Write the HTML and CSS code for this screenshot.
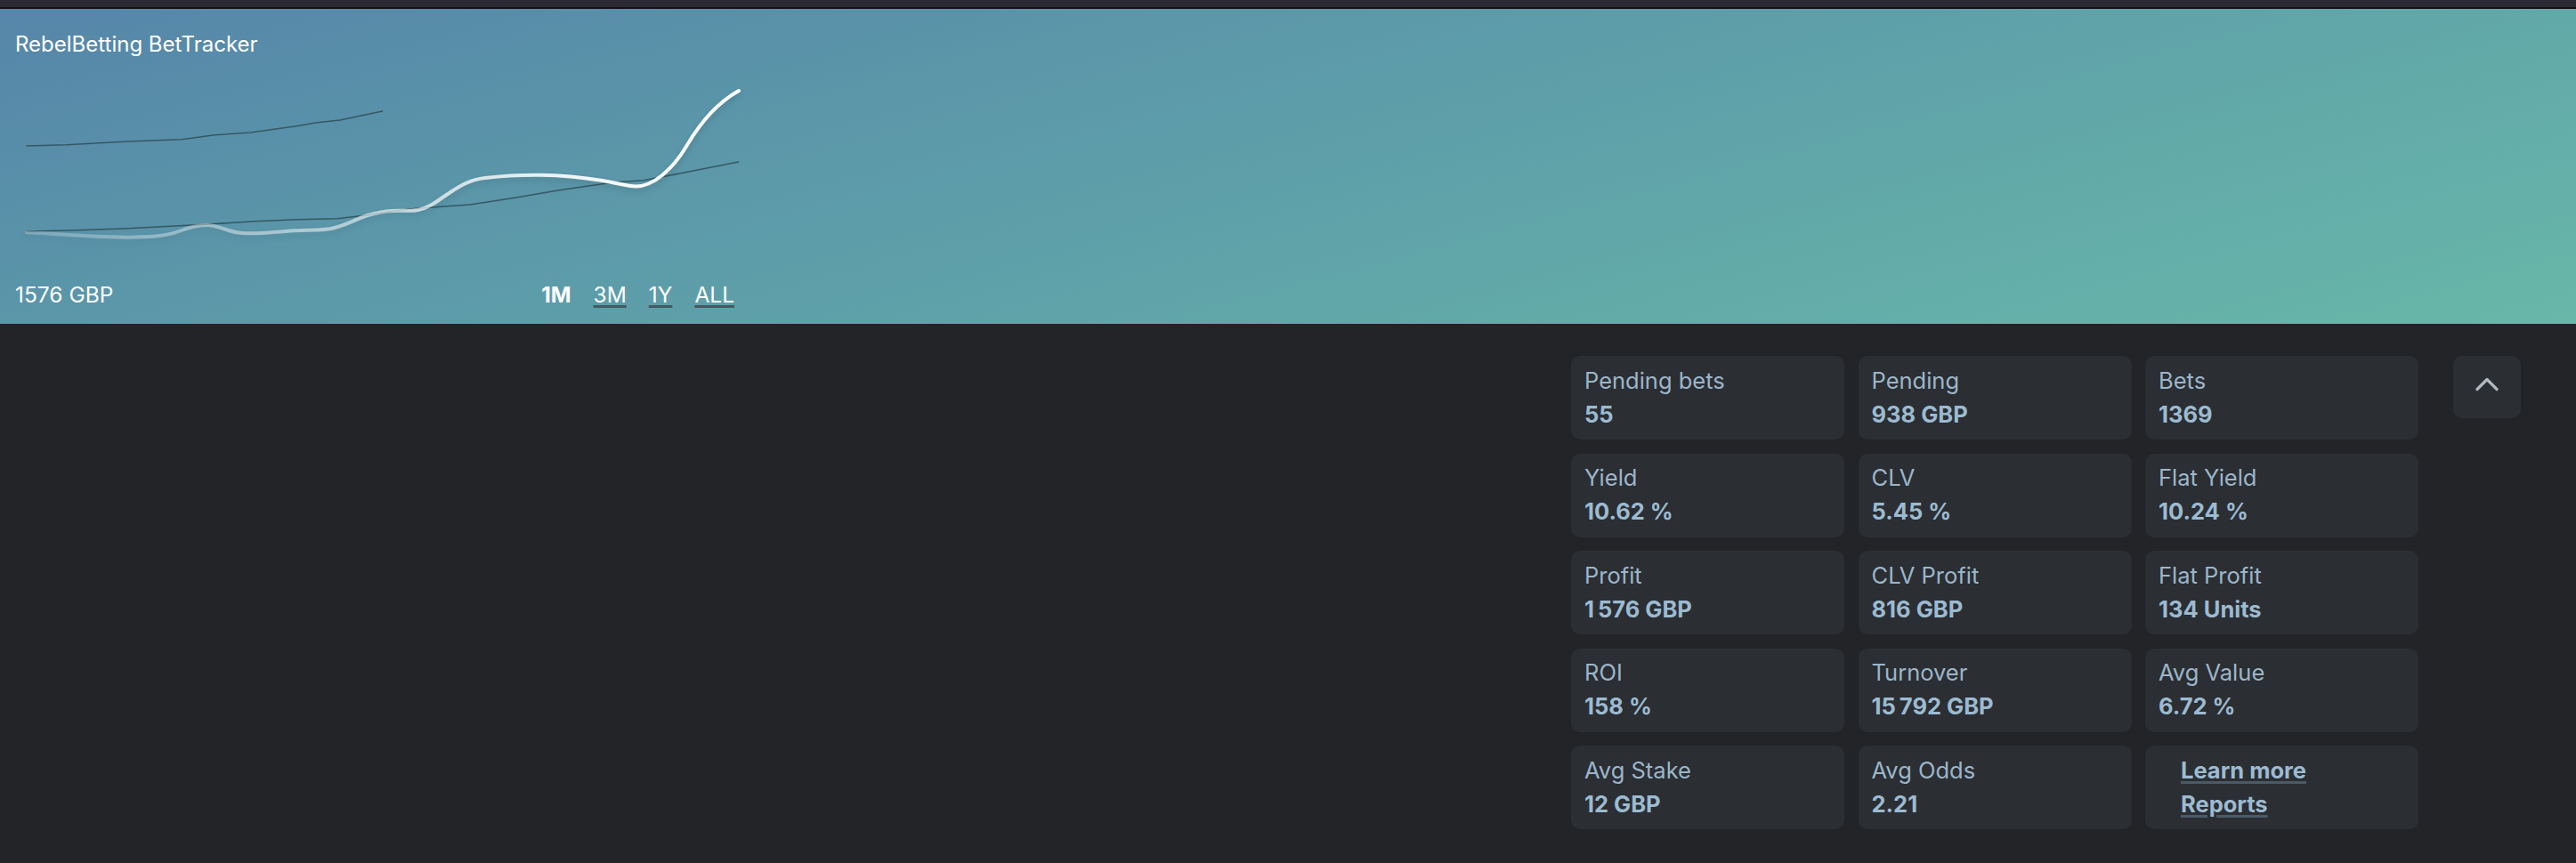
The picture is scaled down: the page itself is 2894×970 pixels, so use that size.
FILE: index.html
```html
<!DOCTYPE html>
<html lang="en">
<head>
<meta charset="utf-8">
<title>RebelBetting BetTracker</title>
<link rel="stylesheet" href="styles.css">
</head>
<body>
<div class="topbar"></div>
<header class="hero">
  <div class="hero-inner">
    <div class="hero-title">RebelBetting BetTracker</div>
    <svg class="chart" width="813" height="251" viewBox="17 65 813 251" xmlns="http://www.w3.org/2000/svg">
      <defs>
        <linearGradient id="mainGrad" gradientUnits="userSpaceOnUse" x1="30" y1="0" x2="830" y2="0">
          <stop offset="0" stop-color="#ffffff" stop-opacity="0.22"/>
          <stop offset="0.45" stop-color="#ffffff" stop-opacity="0.55"/>
          <stop offset="0.75" stop-color="#ffffff" stop-opacity="0.9"/>
          <stop offset="1" stop-color="#ffffff" stop-opacity="1"/>
        </linearGradient>
      </defs>
      <polyline class="line-thin" points="30,164 75,162.7 143.5,159 204,156.7 241,151.7 281,149 333,141.7 356,137.7 382,135 429.5,125"/>
      <polyline class="line-thin" points="30,260 86,258.7 143.5,256.7 229.6,252.3 287,248.7 333,246.7 379,245.7 413,241.7 459,235 528,230 574,223 631.5,213.3 689,205 723,202.7 775,192.7 829.5,182"/>
      <path class="line-main" d="M30,261 C60,263 110,267 143.5,266.7 C165,266.5 185,266 201,260 C214,255 222,253 232,253 C246,253 256,261 272,262 C288,263.5 305,261 327,259.5 C345,258.5 362,259 372,257 C390,253 400,246 413,242 C424,239 430,237.5 440,237 C452,236.5 460,237.5 470,236 C484,233 492,225 505,216.7 C518,208 528,202 545,200 C565,197.5 590,196.5 608,196.7 C628,197 655,199.5 677,203 C695,206 705,209.5 714.7,209.5 C724,209.5 734,205 744,197 C754,188 762,180 772,163 C785,141 805,116 830,102"/>
    </svg>
    <div class="hero-foot">
      <span class="balance">1576 GBP</span>
      <nav class="ranges">
        <a class="range range-active">1M</a>
        <a class="range">3M</a>
        <a class="range">1Y</a>
        <a class="range">ALL</a>
      </nav>
    </div>
  </div>
</header>
<main class="stats-area">
  <section class="stats-grid">
    <div class="stat"><div class="stat-label">Pending bets</div><div class="stat-value">55</div></div>
    <div class="stat"><div class="stat-label">Pending</div><div class="stat-value">938 GBP</div></div>
    <div class="stat"><div class="stat-label">Bets</div><div class="stat-value">1369</div></div>
    <div class="stat"><div class="stat-label">Yield</div><div class="stat-value">10.62 %</div></div>
    <div class="stat"><div class="stat-label">CLV</div><div class="stat-value">5.45 %</div></div>
    <div class="stat"><div class="stat-label">Flat Yield</div><div class="stat-value">10.24 %</div></div>
    <div class="stat"><div class="stat-label">Profit</div><div class="stat-value">1&#8239;576 GBP</div></div>
    <div class="stat"><div class="stat-label">CLV Profit</div><div class="stat-value">816 GBP</div></div>
    <div class="stat"><div class="stat-label">Flat Profit</div><div class="stat-value">134 Units</div></div>
    <div class="stat"><div class="stat-label">ROI</div><div class="stat-value">158 %</div></div>
    <div class="stat"><div class="stat-label">Turnover</div><div class="stat-value">15&#8239;792 GBP</div></div>
    <div class="stat"><div class="stat-label">Avg Value</div><div class="stat-value">6.72 %</div></div>
    <div class="stat"><div class="stat-label">Avg Stake</div><div class="stat-value">12 GBP</div></div>
    <div class="stat"><div class="stat-label">Avg Odds</div><div class="stat-value">2.21</div></div>
    <div class="stat stat-links">
      <ul class="link-list">
        <li><a class="stat-link">Learn more</a></li>
        <li><a class="stat-link">Reports</a></li>
      </ul>
    </div>
  </section>
  <button class="collapse" type="button" aria-label="Collapse">
    <svg width="26" height="16" viewBox="0 0 26 16" xmlns="http://www.w3.org/2000/svg">
      <polyline points="2,13.5 13,2.5 24,13.5" fill="none" stroke="#b3b8be" stroke-width="3.2" stroke-linecap="round" stroke-linejoin="round"/>
    </svg>
  </button>
</main>
</body>
</html>
```
FILE: styles.css
```css
html, body {
  margin: 0;
  padding: 0;
}

body {
  background: #222428;
  font-family: "Inter", "Noto Sans", "Liberation Sans", sans-serif;
  width: 2894px;
  height: 970px;
  overflow: hidden;
}

.topbar {
  height: 8px;
  background: #2a2934;
  border-bottom: 2px solid #121215;
}

.hero {
  height: 354px;
  box-sizing: border-box;
  padding: 23px 0 18px 17px;
  background: linear-gradient(165deg, #5686a9 0%, #5d9da9 45%, #68b7a9 100%);
  color: #ffffff;
}

.hero-inner {
  width: 813px;
  display: flex;
  flex-direction: column;
}

.hero-title {
  font-size: 24px;
  line-height: 30px;
  height: 30px;
  padding-top: 2px;
}

.chart {
  display: block;
  overflow: visible;
}

.line-thin {
  fill: none;
  stroke: #2f4e58;
  stroke-opacity: 0.85;
  stroke-width: 1.6;
  stroke-linejoin: round;
  stroke-linecap: round;
}

.line-main {
  fill: none;
  stroke: url(#mainGrad);
  stroke-width: 4;
  stroke-linecap: round;
  stroke-linejoin: round;
  filter: drop-shadow(0 4px 3px rgba(20, 40, 50, 0.18));
}

.hero-foot {
  display: flex;
  justify-content: space-between;
  align-items: baseline;
  height: 30px;
  line-height: 30px;
  font-size: 24.5px;
}

.ranges {
  display: flex;
  gap: 25px;
  padding-right: 5px;
}

.range {
  color: #ffffff;
  text-decoration: underline;
  text-decoration-color: #4a5661;
  text-decoration-thickness: 3px;
  text-underline-offset: 3px;
}

.range-active {
  font-weight: 700;
  text-decoration: none;
}

.stats-area {
  display: flex;
  justify-content: flex-end;
  align-items: flex-start;
  gap: 39px;
  padding: 36px 62px 0 0;
}

.stats-grid {
  display: grid;
  grid-template-columns: repeat(3, 307px);
  grid-auto-rows: 94px;
  column-gap: 15.5px;
  row-gap: 15.5px;
}

.stat {
  background: #2b2e33;
  border-radius: 10px;
  padding: 8.5px 15px;
  box-sizing: border-box;
  color: #9db9cd;
  font-size: 25.5px;
  line-height: 38px;
}

.stat-label {
  font-weight: 400;
  color: #9cb6c9;
}

.stat-value {
  font-weight: 700;
  color: #9cbbd1;
}

.link-list {
  list-style: none;
  margin: 0;
  padding: 0 0 0 25px;
}

.stat-link {
  font-weight: 700;
  color: #9cbbd1;
  text-decoration: underline;
  text-decoration-color: #4a5a68;
  text-decoration-thickness: 2.5px;
  text-underline-offset: 3px;
}

.collapse {
  width: 76px;
  height: 70px;
  border: none;
  border-radius: 10px;
  background: #2b2e33;
  display: flex;
  align-items: center;
  justify-content: center;
  padding: 0 0 6px 0;
  margin: 0;
}

.collapse svg {
  display: block;
}
```
